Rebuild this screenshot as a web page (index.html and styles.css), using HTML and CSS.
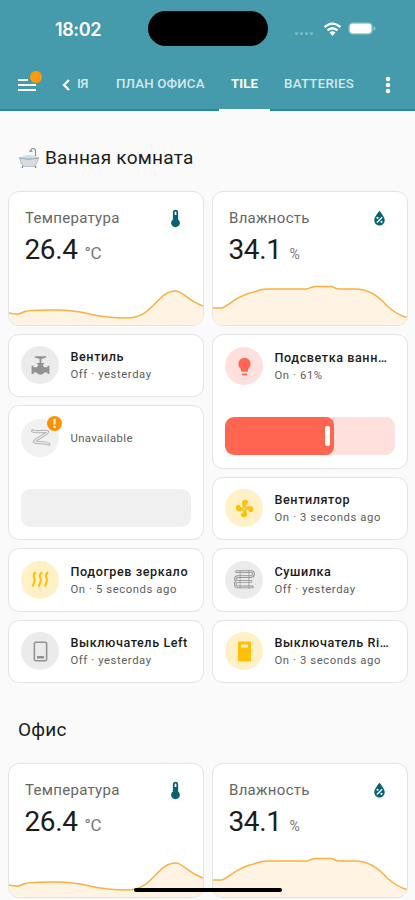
FILE: index.html
```html
<!DOCTYPE html>
<html lang="ru">
<head>
<meta charset="utf-8">
<meta name="viewport" content="width=device-width">
<title>Tile</title>
<link rel="stylesheet" href="styles.css">
</head>
<body>
<svg class="defs" aria-hidden="true">
  <symbol id="thermometer" viewBox="0 0 24 24"><path d="M15 13V5A3 3 0 0 0 9 5V13A5 5 0 1 0 15 13M12 4A1 1 0 0 1 13 5V8H11V5A1 1 0 0 1 12 4Z"/></symbol>
  <symbol id="humidity" viewBox="0 0 24 24"><path d="M12,3.25C12,3.25 6,10 6,14C6,17.32 8.69,20 12,20A6,6 0 0,0 18,14C18,10 12,3.25 12,3.25M14.47,9.97L15.53,11.03L9.53,17.03L8.47,15.97M9.75,10A1.25,1.25 0 0,1 11,11.25A1.25,1.25 0 0,1 9.75,12.5A1.25,1.25 0 0,1 8.5,11.25A1.25,1.25 0 0,1 9.75,10M14.25,14.5A1.25,1.25 0 0,1 15.5,15.75A1.25,1.25 0 0,1 14.25,17A1.25,1.25 0 0,1 13,15.75A1.25,1.25 0 0,1 14.25,14.5Z"/></symbol>
  <symbol id="bulb" viewBox="0 0 24 24"><path d="M12,2A7,7 0 0,0 5,9C5,11.38 6.19,13.47 8,14.74V17A1,1 0 0,0 9,18H15A1,1 0 0,0 16,17V14.74C17.81,13.47 19,11.38 19,9A7,7 0 0,0 12,2M9,21A1,1 0 0,0 10,22H14A1,1 0 0,0 15,21V20H9V21Z"/></symbol>
  <symbol id="fan" viewBox="0 0 24 24"><path d="M12,11A1,1 0 0,0 11,12A1,1 0 0,0 12,13A1,1 0 0,0 13,12A1,1 0 0,0 12,11M12.5,2C17,2 17.11,5.57 14.75,6.75C13.76,7.24 13.32,8.29 13.13,9.22C13.61,9.42 14.03,9.73 14.35,10.13C18.05,8.13 22.03,8.92 22.03,12.5C22.03,17 18.46,17.1 17.28,14.73C16.78,13.74 15.72,13.3 14.79,13.11C14.59,13.59 14.28,14 13.88,14.34C15.87,18.03 15.08,22 11.5,22C7,22 6.91,18.42 9.27,17.24C10.25,16.75 10.69,15.71 10.89,14.79C10.4,14.59 9.97,14.27 9.65,13.87C5.96,15.85 2,15.07 2,11.5C2,7 5.56,6.89 6.74,9.26C7.24,10.25 8.29,10.68 9.22,10.87C9.41,10.39 9.73,9.97 10.14,9.65C8.15,5.96 8.94,2 12.5,2Z"/></symbol>
  <symbol id="valve" viewBox="0 0 24 24"><path d="M5.500 1.500H18.500V2.800L13 4.500V9H16V10.500H14.800V12.200A5 5 0 0 1 16.300 14H20V12.300H22.200V21.700H20V20H16.300A5 5 0 0 1 7.700 20H4V21.700H1.800V12.300H4V14H7.700A5 5 0 0 1 9.200 12.200V10.500H8V9H11V4.500L5.500 2.800Z"/></symbol>
  <symbol id="coil" viewBox="0 0 24 24"><g fill="none" stroke="currentColor" stroke-linecap="round" stroke-linejoin="round"><path stroke-width="3.600" d="M3 4.500C8 7.200 14 3.500 20 5.500C20.500 8.500 7 12.500 5 17C9.500 19 15 16.500 21.500 19.500"/><path class="coil-core" stroke-width="1.300" d="M3 4.500C8 7.200 14 3.500 20 5.500C20.500 8.500 7 12.500 5 17C9.500 19 15 16.500 21.500 19.500"/></g></symbol>
  <symbol id="heat" viewBox="0 0 24 24"><path fill="none" stroke="currentColor" stroke-width="2.500" d="M6.500 3.500L4.500 6.200Q3.500 8 4.700 9.800T5 14.500L3 20M13.500 3.500L11.500 6.200Q10.500 8 11.700 9.800T12 14.500L10 20M20.500 3.500L18.500 6.200Q17.500 8 18.700 9.800T19 14.500L17 20"/></symbol>
  <symbol id="towel" viewBox="0 0 24 24"><g fill="none" stroke="currentColor" stroke-linecap="round"><path stroke-width="3.200" d="M3 3H19.500A2.300 2.300 0 0 1 19.500 8.600H4.500A2.500 2.500 0 0 0 4.500 14.200H19.500M21 20.500H4.500A2.500 2.500 0 0 1 4.500 14.200H19.500"/><path class="towel-core" stroke-width="1" d="M3 3H19.500A2.300 2.300 0 0 1 19.500 8.600H4.500A2.500 2.500 0 0 0 4.500 14.200H19.500M21 20.500H4.500A2.500 2.500 0 0 1 4.500 14.200H19.500"/><path stroke-width=".8" d="M7 2V22M17 2V22"/></g></symbol>
  <symbol id="switch-off" viewBox="0 0 24 24"><rect x="5" y="1.500" width="14" height="21" rx="1.500" fill="none" stroke="currentColor" stroke-width="1.800"/><path d="M8 17H16V20H8Z"/></symbol>
  <symbol id="switch-on" viewBox="0 0 24 24"><path fill-rule="evenodd" d="M6 .5H18Q19.500 .5 19.500 2V22Q19.500 23.500 18 23.500H6Q4.500 23.500 4.500 22V2Q4.500 .5 6 .5ZM8 4V7.500H16V4Z"/></symbol>
  <symbol id="temp-graph" viewBox="0 0 195 43" preserveAspectRatio="none">
    <path class="area" d="M0 31C8 33 11 32 16 29.500C22 27.500 31 28 50 28C77 28 84 36 118 36C146 36 148 9 168 9C174 9 179 18 195 24V43H0Z"/>
    <path class="line" d="M0 31C8 33 11 32 16 29.500C22 27.500 31 28 50 28C77 28 84 36 118 36C146 36 148 9 168 9C174 9 179 18 195 24"/>
  </symbol>
  <symbol id="hum-graph" viewBox="0 0 195 43" preserveAspectRatio="none">
    <path class="area" d="M0 26H8C15 25 20 16 37 11C43 10 46 7 54 7H94C98 6 98 5 103 4.500H119C123 5 122 7 127 7H143C158 7 169 17 175 24C182 30 188 34 195 35.500V43H0Z"/>
    <path class="line" d="M0 26H8C15 25 20 16 37 11C43 10 46 7 54 7H94C98 6 98 5 103 4.500H119C123 5 122 7 127 7H143C158 7 169 17 175 24C182 30 188 34 195 35.500"/>
  </symbol>
</svg>

<header class="header">
  <div class="status">
    <span class="clock">18:02</span>
    <span class="island"></span>
    <span class="signals">
      <span class="cell"><i></i><i></i><i></i><i></i></span>
      <svg class="wifi" viewBox="0 0 18 14"><g fill="none" stroke="#fff" stroke-width="2.300"><path d="M1 5.200Q9-2 17 5.200"/><path d="M4 8.400Q9 4 14 8.400"/></g><path fill="#fff" d="M6 10.500Q9 8 12 10.500L9 14Z"/></svg>
      <svg class="battery" viewBox="0 0 30 14"><rect x=".5" y=".5" width="26" height="13" rx="4.500" fill="#8fc5ce"/><rect x="2" y="2" width="23" height="10" rx="3" fill="#fff"/><path fill="#8fc5ce" d="M27.500 4.500Q29.500 5 29.500 7T27.500 9.500Z"/></svg>
    </span>
  </div>
  <nav class="toolbar">
    <span class="menu"><svg viewBox="0 0 18 14"><path d="M0 2H10M0 7H18M0 12H18" stroke="#fff" stroke-width="2"/></svg><b class="dot"></b></span>
    <svg class="back" viewBox="0 0 8 12"><path d="M7 1L2 6L7 11" fill="none" stroke="#fff" stroke-width="2.300"/></svg>
    <span class="tab tab-cut">ІЯ</span>
    <span class="tab tab-plan">ПЛАН ОФИСА</span>
    <span class="tab tab-active">TILE</span>
    <span class="tab tab-batteries">BATTERIES</span>
    <svg class="more" viewBox="0 0 6 18"><g fill="#fff"><circle cx="3" cy="3" r="2.300"/><circle cx="3" cy="9" r="2.300"/><circle cx="3" cy="15" r="2.300"/></g></svg>
  </nav>
</header>

<main>
  <h2 class="title title-bath"><svg class="tub" viewBox="0 0 22 22"><path d="M17.500 11V4Q17.500 1.300 15 1.500Q12.500 1.800 12.800 4" fill="none" stroke="#8c9296" stroke-width="1.200"/><path d="M11.300 4.200H14.500" stroke="#8c9296" stroke-width="1.400"/><path d="M1.500 11Q11 8 20.500 11L18.500 17Q17.500 19.500 15 19.500H7Q4.500 19.500 3.500 17Z" fill="#d9dcde" stroke="#a9adb0" stroke-width=".7"/><path d="M3 10.500Q5 8 8 8.500Q11 7.500 14 8.500Q18 8 19 10.800Q11 13 3 10.500Z" fill="#c4e2f1"/><path d="M1 10.800Q11 13.500 21 10.800" fill="none" stroke="#a2a7aa" stroke-width="1.100"/><path d="M5 19L4 21M17 19L18 21" stroke="#83898c" stroke-width="1.400"/></svg><span>Ванная комната</span></h2>
  <div class="columns">
    <div class="column">
      <section class="card sensor"><div class="sensor-head"><span>Температура</span><svg><use href="#thermometer"/></svg></div><div class="value">26.4<small>°C</small></div><svg class="graph"><use href="#temp-graph"/></svg></section>
      <section class="card tile"><span class="bubble gray"><svg><use href="#valve"/></svg></span><div class="info"><b>Вентиль</b><span>Off · yesterday</span></div></section>
      <section class="card large"><div class="row"><span class="bubble pale"><svg><use href="#coil"/></svg><i class="badge"><svg viewBox="0 0 16 16"><path d="M8 3V9M8 10.500V12.800" stroke="#fff" stroke-width="2.200"/></svg></i></span><div class="info"><span class="unavailable">Unavailable</span></div></div><div class="slider empty"></div></section>
      <section class="card tile"><span class="bubble amber"><svg><use href="#heat"/></svg></span><div class="info"><b>Подогрев зеркало</b><span>On · 5 seconds ago</span></div></section>
      <section class="card tile"><span class="bubble gray"><svg><use href="#switch-off"/></svg></span><div class="info"><b>Выключатель Left</b><span>Off · yesterday</span></div></section>
    </div>
    <div class="column">
      <section class="card sensor"><div class="sensor-head"><span>Влажность</span><svg><use href="#humidity"/></svg></div><div class="value">34.1<small class="pct">%</small></div><svg class="graph"><use href="#hum-graph"/></svg></section>
      <section class="card large"><div class="row"><span class="bubble red"><svg><use href="#bulb"/></svg></span><div class="info"><b>Подсветка ванной</b><span>On · 61%</span></div></div><div class="slider light"><div class="fill"><i></i></div></div></section>
      <section class="card tile"><span class="bubble amber"><svg><use href="#fan"/></svg></span><div class="info"><b>Вентилятор</b><span>On · 3 seconds ago</span></div></section>
      <section class="card tile"><span class="bubble gray"><svg><use href="#towel"/></svg></span><div class="info"><b>Сушилка</b><span>Off · yesterday</span></div></section>
      <section class="card tile"><span class="bubble amber"><svg><use href="#switch-on"/></svg></span><div class="info"><b>Выключатель Right</b><span>On · 3 seconds ago</span></div></section>
    </div>
  </div>
  <h2 class="title title-office">Офис</h2>
  <div class="columns">
    <section class="card sensor"><div class="sensor-head"><span>Температура</span><svg><use href="#thermometer"/></svg></div><div class="value">26.4<small>°C</small></div><svg class="graph"><use href="#temp-graph"/></svg></section>
    <section class="card sensor"><div class="sensor-head"><span>Влажность</span><svg><use href="#humidity"/></svg></div><div class="value">34.1<small class="pct">%</small></div><svg class="graph"><use href="#hum-graph"/></svg></section>
  </div>
</main>
<div class="home"></div>
</body>
</html>
```
FILE: styles.css
```css
* { box-sizing: border-box; }
html, body { height: 900px; overflow: hidden; }
body { margin: 0; background: #fafafa; color: #1c1c1c; font-family: Roboto, sans-serif; }
svg { display: block; flex: none; fill: currentColor; }
.defs { position: absolute; width: 0; height: 0; }

.header { height: 111px; background: #459aab; border-bottom: 2px solid #238c98; color: #fff; }
.status { height: 58px; display: grid; grid-template-columns: 148px 120px 1fr; align-items: end; }
.clock { padding: 0 0 16px 55px; font: 600 18px/24px Inter, sans-serif; letter-spacing: -.4px; }
.island { height: 35px; margin-bottom: 12px; border-radius: 18px; background: #000; }
.signals { display: flex; align-items: center; height: 14px; margin-bottom: 22.5px; padding-left: 27px; }
.cell { display: flex; gap: 2px; width: 28px; padding-top: 9px; }
.cell i { width: 3px; height: 3px; border-radius: 50%; background: #80bac5; }
.wifi { width: 19px; height: 14px; }
.battery { width: 30px; height: 13px; margin-left: 5px; }
.toolbar { height: 53px; display: flex; align-items: center; padding-left: 18px; }
.menu { position: relative; width: 18px; margin-right: 26px; }
.menu svg { width: 18px; height: 14px; }
.dot { position: absolute; left: 12px; top: -7px; width: 12px; height: 12px; border-radius: 50%; background: #ff9b0b; }
.back { width: 8px; height: 12px; margin-right: 7px; }
.tab { flex: none; font-size: 13.3px; line-height: 52px; height: 53px; font-weight: 500; color: #d3e9ed; white-space: nowrap; }
.tab-cut { width: 12px; margin-right: 27px; letter-spacing: -.4px; }
.tab-plan { width: 103px; letter-spacing: .15px; }
.tab-active { width: 51px; color: #fff; text-align: center; font-weight: 700; border-bottom: 2px solid #fff; }
.tab-batteries { margin-left: 14px; width: 70px; letter-spacing: .25px; }
.more { width: 6px; height: 18px; margin-left: 31px; }

.title { margin: 0; height: 79.5px; padding: 34px 18px 0; font-size: 19px; line-height: 26px; font-weight: 400; letter-spacing: .25px; }
.title-bath { display: flex; gap: 5px; }
.tub { width: 22px; height: 22px; margin-top: 2px; }
.columns { display: grid; grid-template-columns: 196px 196px; gap: 8px; padding-left: 8px; }
.column { display: flex; flex-direction: column; gap: 8px; }
.card { background: #fff; border: 1px solid #e3e3e3; border-radius: 11px; overflow: hidden; }
.sensor { height: 135px; display: flex; flex-direction: column; }
.sensor-head { height: 39px; padding: 14px 17px 0 16px; display: flex; justify-content: space-between; align-items: center; font-size: 15px; line-height: 20px; letter-spacing: .3px; color: #666; }
.sensor-head svg { width: 21px; height: 21px; color: #08636e; }
.value { height: 36px; padding-left: 15.5px; font-size: 28px; line-height: 38px; letter-spacing: -.4px; color: #1c1c1c; }
.value small { font-size: 17px; color: #777; margin-left: 7px; }
.value .pct { font-size: 14px; margin-left: 8px; }
.graph { width: 194px; height: 43px; margin-top: auto; }
.area { fill: #fff3e4; }
.line { fill: none; stroke: #fbb040; stroke-width: 1.5; }

.tile { height: 63.6px; display: flex; align-items: center; padding: 0 12px; }
.large { height: 135px; padding: 12.5px 12px; display: flex; flex-direction: column; justify-content: space-between; }
.row { display: flex; align-items: center; }
.bubble { position: relative; flex: none; width: 38px; height: 38px; border-radius: 50%; display: grid; place-items: center; }
.bubble > svg { width: 21px; height: 21px; }
.gray { background: #ebebeb; color: #929292; }
.pale { background: #f1f1f1; color: #b0b0b0; }
.amber { background: #fff1c5; color: #ffc107; }
.red { background: #ffe0dc; color: #ff6551; }
.coil-core { stroke: #f1f1f1; }
.towel-core { stroke: #ebebeb; }
.badge { position: absolute; right: -3px; top: -3px; width: 15px; height: 15px; border-radius: 50%; background: #ff9100; }
.badge svg { width: 15px; height: 15px; }
.info { margin-left: 11.5px; padding-top: 1px; flex: 1; min-width: 0; display: flex; flex-direction: column; }
.info b { margin-right: 2px; font-size: 12.6px; line-height: 18px; font-weight: 500; letter-spacing: .58px; white-space: nowrap; overflow: hidden; text-overflow: ellipsis; }
.info span { font-size: 11.3px; line-height: 17px; letter-spacing: .58px; color: #5c5c5c; white-space: nowrap; }
.info .unavailable { letter-spacing: .4px; }
.slider { height: 38px; border-radius: 9px; overflow: hidden; }
.empty { background: #f0f0f0; }
.light { background: #ffe0dc; }
.fill { width: 109px; height: 100%; border-radius: 8px; background: #ff6551; display: flex; align-items: center; justify-content: flex-end; padding-right: 4px; }
.fill i { width: 5px; height: 20px; border-radius: 2px; background: #fff; }
.home { position: fixed; left: 134px; top: 888px; width: 148px; height: 4px; border-radius: 2px; background: #000; }
```
